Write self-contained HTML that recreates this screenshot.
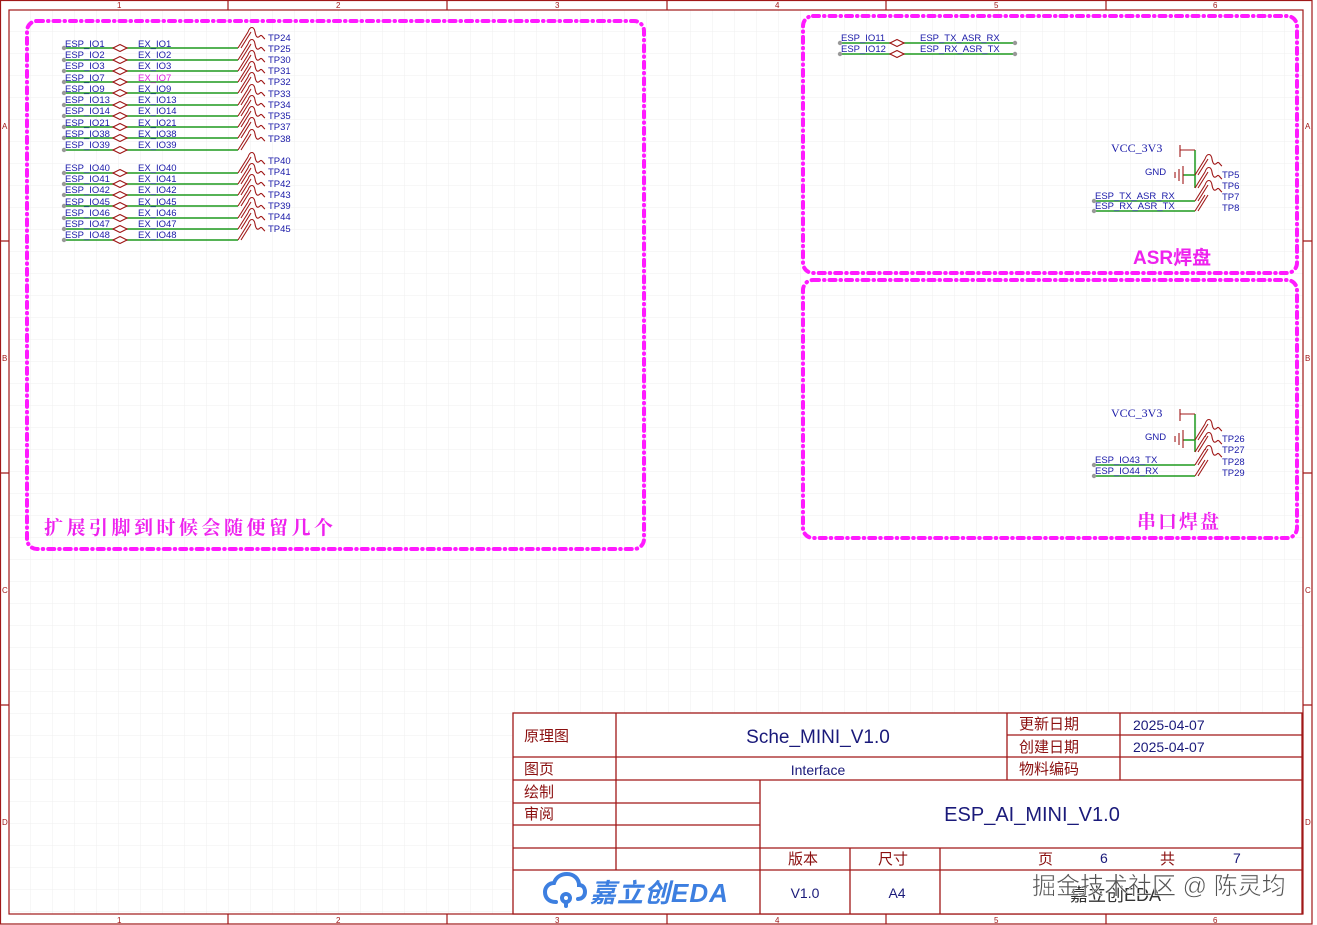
<!DOCTYPE html>
<html><head><meta charset="utf-8"><style>
html,body{margin:0;padding:0;background:#fff;}
svg{display:block;}
text{font-family:"Liberation Sans","Noto Sans CJK SC",sans-serif;}
</style></head><body>
<svg width="1317" height="925" viewBox="0 0 1317 925" xmlns="http://www.w3.org/2000/svg">
<defs>
<pattern id="g" width="22" height="22" patternUnits="userSpaceOnUse" x="9" y="10">
<path d="M22 0V22M0 22H22" stroke="#efefef" stroke-width="1" fill="none"/>
</pattern>
</defs>
<rect x="9" y="10" width="1294" height="904" fill="url(#g)"/>
<g stroke="#a01818" stroke-width="1.2" fill="none">
<rect x="0.5" y="0.5" width="1311.5" height="923.5"/>
<rect x="9" y="10" width="1294" height="904"/>
<path d="M228 0V10M447 0V10M667 0V10M886 0V10M1106 0V10M228 914V924M447 914V924M667 914V924M886 914V924M1106 914V924M0 241H9M0 473H9M0 705H9M1303 241H1312M1303 473H1312M1303 705H1312"/>
</g>
<g fill="#a01818" font-size="8" font-family="Liberation Serif,serif">
<text x="117" y="8">1</text><text x="336" y="8">2</text><text x="555" y="8">3</text><text x="775" y="8">4</text><text x="994" y="8">5</text><text x="1213" y="8">6</text>
<text x="117" y="923">1</text><text x="336" y="923">2</text><text x="555" y="923">3</text><text x="775" y="923">4</text><text x="994" y="923">5</text><text x="1213" y="923">6</text>
<text x="2" y="129">A</text><text x="2" y="361">B</text><text x="2" y="593">C</text><text x="2" y="825">D</text>
<text x="1305" y="129">A</text><text x="1305" y="361">B</text><text x="1305" y="593">C</text><text x="1305" y="825">D</text>
</g>
<g stroke="#ff1aff" stroke-width="4" fill="none" stroke-dasharray="6,5,0.5,5" stroke-linecap="round">
<rect x="27" y="21" width="617" height="528" rx="10"/>
<rect x="803" y="16" width="494" height="257" rx="10"/>
<rect x="803" y="280" width="494" height="258" rx="10"/>
</g>
<g stroke="#1f9a1f" stroke-width="1.5">
<path d="M64 48H238M64 60H238M64 71H238M64 82H238M64 93H238M64 105H238M64 116H238M64 127H238M64 138H238M64 150H238"/>
<path d="M64 173H238M64 184H238M64 195H238M64 206H238M64 218H238M64 229H238M64 240H238"/>
<path d="M840 43H1015M840 54H1015"/>
<path d="M1093 201H1195M1093 211H1195M1093 465H1195M1093 476H1195"/>
<path d="M1195 150V188M1183 175H1195M1195 414V452M1183 440H1195"/>
</g>
<g fill="#999">
<circle cx="64" cy="48" r="2.2"/><circle cx="64" cy="60" r="2.2"/><circle cx="64" cy="71" r="2.2"/><circle cx="64" cy="82" r="2.2"/><circle cx="64" cy="93" r="2.2"/><circle cx="64" cy="105" r="2.2"/><circle cx="64" cy="116" r="2.2"/><circle cx="64" cy="127" r="2.2"/><circle cx="64" cy="138" r="2.2"/><circle cx="64" cy="150" r="2.2"/>
<circle cx="64" cy="173" r="2.2"/><circle cx="64" cy="184" r="2.2"/><circle cx="64" cy="195" r="2.2"/><circle cx="64" cy="206" r="2.2"/><circle cx="64" cy="218" r="2.2"/><circle cx="64" cy="229" r="2.2"/><circle cx="64" cy="240" r="2.2"/>
<circle cx="840" cy="43" r="2.2"/><circle cx="840" cy="54" r="2.2"/><circle cx="1015" cy="43" r="2.2"/><circle cx="1015" cy="54" r="2.2"/>
<circle cx="1094" cy="201" r="2.2"/><circle cx="1094" cy="211" r="2.2"/><circle cx="1094" cy="465" r="2.2"/><circle cx="1094" cy="476" r="2.2"/>
</g>
<g stroke="#a01818" stroke-width="1.2" fill="#fff">
<path d="M113 48l7-3.5 7 3.5-7 3.5zM113 60l7-3.5 7 3.5-7 3.5zM113 71l7-3.5 7 3.5-7 3.5zM113 82l7-3.5 7 3.5-7 3.5zM113 93l7-3.5 7 3.5-7 3.5zM113 105l7-3.5 7 3.5-7 3.5zM113 116l7-3.5 7 3.5-7 3.5zM113 127l7-3.5 7 3.5-7 3.5zM113 138l7-3.5 7 3.5-7 3.5zM113 150l7-3.5 7 3.5-7 3.5z"/>
<path d="M113 173l7-3.5 7 3.5-7 3.5zM113 184l7-3.5 7 3.5-7 3.5zM113 195l7-3.5 7 3.5-7 3.5zM113 206l7-3.5 7 3.5-7 3.5zM113 218l7-3.5 7 3.5-7 3.5zM113 229l7-3.5 7 3.5-7 3.5zM113 240l7-3.5 7 3.5-7 3.5z"/>
<path d="M890 43l7-3.5 7 3.5-7 3.5zM890 54l7-3.5 7 3.5-7 3.5z"/>
</g>
<g stroke="#a01818" stroke-width="1.1" fill="none">
<path d="M238 48l10-16M238 60l10-16M238 71l10-16M238 82l10-16M238 93l10-16M238 105l10-16M238 116l10-16M238 127l10-16M238 138l10-16M238 150l10-16"/>
<path d="M241 48l10-16M241 60l10-16M241 71l10-16M241 82l10-16M241 93l10-16M241 105l10-16M241 116l10-16M241 127l10-16M241 138l10-16M241 150l10-16"/>
<path d="M248 32c2-6 6-6 7 0s3 6 5 4 3 2 5 3M248 44c2-6 6-6 7 0s3 6 5 4 3 2 5 3M248 55c2-6 6-6 7 0s3 6 5 4 3 2 5 3M248 66c2-6 6-6 7 0s3 6 5 4 3 2 5 3M248 77c2-6 6-6 7 0s3 6 5 4 3 2 5 3M248 89c2-6 6-6 7 0s3 6 5 4 3 2 5 3M248 100c2-6 6-6 7 0s3 6 5 4 3 2 5 3M248 111c2-6 6-6 7 0s3 6 5 4 3 2 5 3M248 122c2-6 6-6 7 0s3 6 5 4 3 2 5 3M248 134c2-6 6-6 7 0s3 6 5 4 3 2 5 3"/>
<path d="M238 173l10-16M238 184l10-16M238 195l10-16M238 206l10-16M238 218l10-16M238 229l10-16M238 240l10-16"/>
<path d="M241 173l10-16M241 184l10-16M241 195l10-16M241 206l10-16M241 218l10-16M241 229l10-16M241 240l10-16"/>
<path d="M248 157c2-6 6-6 7 0s3 6 5 4 3 2 5 3M248 168c2-6 6-6 7 0s3 6 5 4 3 2 5 3M248 179c2-6 6-6 7 0s3 6 5 4 3 2 5 3M248 190c2-6 6-6 7 0s3 6 5 4 3 2 5 3M248 202c2-6 6-6 7 0s3 6 5 4 3 2 5 3M248 213c2-6 6-6 7 0s3 6 5 4 3 2 5 3M248 224c2-6 6-6 7 0s3 6 5 4 3 2 5 3"/>
<path d="M1195 188l10-16M1195 201l10-16M1195 211l10-16M1195 175l10-16M1198 188l10-16M1198 201l10-16M1198 211l10-16M1198 175l10-16"/>
<path d="M1205 159c2-6 6-6 7 0s3 6 5 4 3 2 5 3M1205 172c2-6 6-6 7 0s3 6 5 4 3 2 5 3M1205 185c2-6 6-6 7 0s3 6 5 4 3 2 5 3"/>
<path d="M1180 145V157M1180 150H1195M1183 166V184M1179 169V181M1175 172V178"/>
<path d="M1195 452l10-16M1195 465l10-16M1195 476l10-16M1195 440l10-16M1198 452l10-16M1198 465l10-16M1198 476l10-16M1198 440l10-16"/>
<path d="M1205 424c2-6 6-6 7 0s3 6 5 4 3 2 5 3M1205 437c2-6 6-6 7 0s3 6 5 4 3 2 5 3M1205 450c2-6 6-6 7 0s3 6 5 4 3 2 5 3"/>
<path d="M1180 409V421M1180 414H1195M1183 430V448M1179 433V445M1175 436V442"/>
</g>
<g font-size="9.5" fill="#1a1aa8">
<text x="65" y="47">ESP_IO1</text><text x="65" y="58">ESP_IO2</text><text x="65" y="69">ESP_IO3</text><text x="65" y="81">ESP_IO7</text><text x="65" y="92">ESP_IO9</text><text x="65" y="103">ESP_IO13</text><text x="65" y="114">ESP_IO14</text><text x="65" y="126">ESP_IO21</text><text x="65" y="137">ESP_IO38</text><text x="65" y="148">ESP_IO39</text>
<text x="65" y="171">ESP_IO40</text><text x="65" y="182">ESP_IO41</text><text x="65" y="193">ESP_IO42</text><text x="65" y="205">ESP_IO45</text><text x="65" y="216">ESP_IO46</text><text x="65" y="227">ESP_IO47</text><text x="65" y="238">ESP_IO48</text>
<text x="138" y="47">EX_IO1</text><text x="138" y="58">EX_IO2</text><text x="138" y="69">EX_IO3</text><text x="138" y="81" fill="#e020e0">EX_IO7</text><text x="138" y="92">EX_IO9</text><text x="138" y="103">EX_IO13</text><text x="138" y="114">EX_IO14</text><text x="138" y="126">EX_IO21</text><text x="138" y="137">EX_IO38</text><text x="138" y="148">EX_IO39</text>
<text x="138" y="171">EX_IO40</text><text x="138" y="182">EX_IO41</text><text x="138" y="193">EX_IO42</text><text x="138" y="205">EX_IO45</text><text x="138" y="216">EX_IO46</text><text x="138" y="227">EX_IO47</text><text x="138" y="238">EX_IO48</text>
<text x="841" y="41">ESP_IO11</text><text x="841" y="52">ESP_IO12</text><text x="920" y="41">ESP_TX_ASR_RX</text><text x="920" y="52">ESP_RX_ASR_TX</text>
<text x="1095" y="199">ESP_TX_ASR_RX</text><text x="1095" y="209">ESP_RX_ASR_TX</text>
<text x="1095" y="463">ESP_IO43_TX</text><text x="1095" y="474">ESP_IO44_RX</text>
</g>
<g font-size="9.5" fill="#1a1aa8">
<text x="268" y="41">TP24</text><text x="268" y="52">TP25</text><text x="268" y="63">TP30</text><text x="268" y="74">TP31</text><text x="268" y="85">TP32</text><text x="268" y="97">TP33</text><text x="268" y="108">TP34</text><text x="268" y="119">TP35</text><text x="268" y="130">TP37</text><text x="268" y="142">TP38</text>
<text x="268" y="164">TP40</text><text x="268" y="175">TP41</text><text x="268" y="187">TP42</text><text x="268" y="198">TP43</text><text x="268" y="209">TP39</text><text x="268" y="220">TP44</text><text x="268" y="232">TP45</text>
<text x="1222" y="178">TP5</text><text x="1222" y="189">TP6</text><text x="1222" y="200">TP7</text><text x="1222" y="211">TP8</text>
<text x="1222" y="442">TP26</text><text x="1222" y="453">TP27</text><text x="1222" y="465">TP28</text><text x="1222" y="476">TP29</text>
<text x="1145" y="175">GND</text><text x="1145" y="440">GND</text>
</g>
<g font-size="12" fill="#1a1aa8">
<text x="1111" y="152" style="font-family:'Liberation Serif',serif">VCC_3V3</text>
<text x="1111" y="417" style="font-family:'Liberation Serif',serif">VCC_3V3</text>
</g>
<g fill="#ee22ee" font-weight="bold">
<text x="44" y="534" font-size="19" letter-spacing="3.5" style="font-family:'Liberation Serif','Noto Serif CJK SC',serif">扩展引脚到时候会随便留几个</text>
<text x="1133" y="264" font-size="19">ASR焊盘</text>
<text x="1137" y="528" font-size="19" letter-spacing="2" style="font-family:'Liberation Serif','Noto Serif CJK SC',serif">串口焊盘</text>
</g>
<rect x="513" y="713" width="789" height="201" fill="#fff"/>
<g stroke="#a01818" stroke-width="1.3" fill="none">
<rect x="513" y="713" width="789" height="201"/>
<path d="M616 713V870M760 780V914M850 848V914M940 848V914M1007 713V780M1120 713V780"/>
<path d="M1007 735H1302M513 757H1302M513 780H1302M513 803H760M513 825H760M513 848H1302M513 870H1302"/>
</g>
<g font-size="15" fill="#8b1010">
<text x="524" y="741">原理图</text><text x="524" y="774">图页</text><text x="524" y="797">绘制</text><text x="524" y="819">审阅</text>
<text x="1019" y="729">更新日期</text><text x="1019" y="752">创建日期</text><text x="1019" y="774">物料编码</text>
<text x="788" y="864">版本</text><text x="878" y="864">尺寸</text><text x="1038" y="864">页</text><text x="1160" y="864">共</text>
</g>
<g fill="#1a1a7a">
<text x="818" y="743" font-size="19" text-anchor="middle">Sche_MINI_V1.0</text>
<text x="818" y="775" font-size="14" text-anchor="middle">Interface</text>
<text x="1032" y="821" font-size="20" text-anchor="middle">ESP_AI_MINI_V1.0</text>
<text x="1133" y="730" font-size="14">2025-04-07</text><text x="1133" y="752" font-size="14">2025-04-07</text>
<text x="1100" y="863" font-size="14">6</text><text x="1233" y="863" font-size="14">7</text>
<text x="805" y="898" font-size="14" text-anchor="middle">V1.0</text><text x="897" y="898" font-size="14" text-anchor="middle">A4</text>
</g>
<g fill="none" stroke="#3d7fe0" stroke-width="4" stroke-linecap="round">
<path d="M556 902c-8 0-11-5-11-10s4-9 9-9c2-6 7-9 13-9 7 0 12 5 12 11 4 0 6 3 6 7s-3 7-7 7"/>
<circle cx="566" cy="898" r="4"/><path d="M566 902v4"/>
</g>
<text x="590" y="902" font-size="26" font-weight="bold" font-style="italic" fill="#3d7fe0" letter-spacing="1">嘉立创EDA</text>
<text x="1070" y="901" font-size="18" fill="#333">嘉立创EDA</text>
<text x="1032" y="894" font-size="24" fill="#555" stroke="#fff" stroke-width="0.5">掘金技术社区 @ 陈灵均</text>
</svg>
</body></html>
